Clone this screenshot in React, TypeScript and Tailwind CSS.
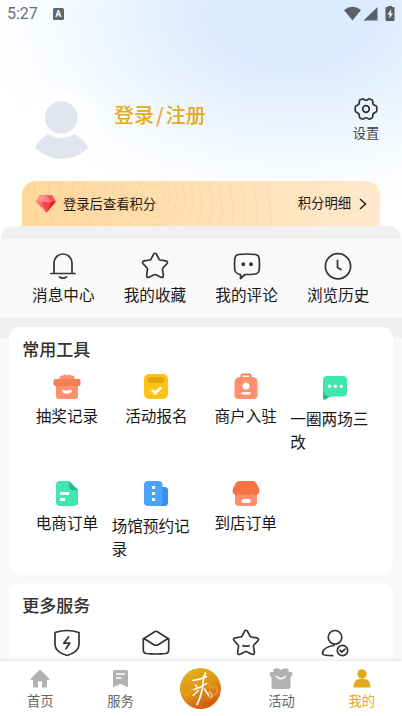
import React from "react";

const FONT = "font-['Noto_Sans_CJK_SC','Noto_Sans',sans-serif]";

function Line({ children }: { children: React.ReactNode }) {
  return (
    <svg width="28" height="28" viewBox="0 0 28 28" fill="none" stroke="#333" strokeWidth="1.7" strokeLinecap="round" strokeLinejoin="round">
      {children}
    </svg>
  );
}

function Fill({ children }: { children: React.ReactNode }) {
  return <svg width="28" height="28" viewBox="0 0 28 28">{children}</svg>;
}

const STAR =
  "M12.5 2.3Q14 .2 15.5 2.3L18 7.2Q18.3 7.9 19.2 8L24.8 8.9Q27.6 9.6 25.8 11.8L21.9 16Q21.4 16.6 21.5 17.3L22.4 23.4Q22.4 26.2 19.9 25.2L14.9 22.7Q14 22.3 13.1 22.7L8.1 25.2Q5.6 26.2 5.6 23.4L6.5 17.3Q6.6 16.6 6.1 16L2.2 11.8Q.4 9.6 3.2 8.9L8.800 8Q9.700 7.900 10 7.200Z";

const quick = [
  { label: "消息中心", icon: <Line><path d="M5 21V11a9 9 0 0 1 18 0v10M2 21.5h24M10.5 25Q14 27.2 17.5 25" /></Line> },
  { label: "我的收藏", icon: <Line><path d={STAR} /></Line> },
  {
    label: "我的评论",
    icon: <Line><path d="M5.500 2.500Q14 1.500 22.500 2.500 25.800 3 26.200 6.500q.5 6 0 11.500-.5 3.500-4.200 4-5 .6-10 .5L7.500 26.500v-4Q2.300 21.500 1.800 18q-.5-6 0-11.500Q2.200 3 5.500 2.500Z" /><circle cx="10.300" cy="12.300" r="1.100" fill="#333" /><circle cx="18" cy="12.300" r="1.100" fill="#333" /></Line>,
  },
  { label: "浏览历史", icon: <Line><circle cx="14" cy="14.300" r="12.600" /><path d="M13.500 8.300v7.200l3.500 2" /></Line> },
];

const tools = [
  {
    label: "抽奖记录",
    icon: <Fill><path d="M6.500 7Q5.500 2 10 2.500Q12 .5 14 2.800Q16 .5 18 2.500Q22.500 2 21.500 7Z" fill="#ff906b" /><path d="M3 11h22v12q0 3-3 3H6q-3 0-3-3Z" fill="#ff906b" /><rect x=".5" y="6" width="27" height="7" rx="2" fill="#f37f55" /><path d="M10.500 18q3.500 2.500 7 0" fill="none" stroke="#fff" strokeWidth="2.800" strokeLinecap="round" /></Fill>,
  },
  {
    label: "活动报名",
    icon: <Fill><rect x="2" y="1" width="24" height="25" rx="5" fill="#ffc315" /><rect x="5.500" y="4" width="17" height="6" rx="3" fill="#dfa90e" /><path d="m10 17 3.300 3 5.700-5.500" fill="none" stroke="#fff" strokeWidth="2.800" /></Fill>,
  },
  {
    label: "商户入驻",
    icon: <Fill><path d="M9.500 5V2.500q0-1 1-1h7q1 0 1 1V5" fill="none" stroke="#f37f55" strokeWidth="2" /><path d="M7 4h14q4.500 1 4.500 5v13q0 4-4 4h-15q-4 0-4-4V9Q2.500 5 7 4Z" fill="#ff906b" /><circle cx="14" cy="13" r="3.500" fill="#fff" /><rect x="9.500" y="19" width="9" height="2.500" fill="#fff" /></Fill>,
  },
  {
    label: "一圈两场三改",
    icon: <Fill><path d="M2 14v12.500h3q2-3 7-3.500Z" fill="#24bd88" /><path d="M6 3h16q4 0 4 4v12.500q0 4-4 4H10q-8 0-8-8V7q0-4 4-4Z" fill="#40e6b0" /><g fill="#fff"><circle cx="8.500" cy="13.300" r="1.700" /><circle cx="14.300" cy="13.300" r="1.700" /><circle cx="20.200" cy="13.300" r="1.700" /></g></Fill>,
  },
  {
    label: "电商订单",
    icon: <Fill><path d="M7 1h9l9 9v12q0 4-4 4H7q-4 0-4-4V5q0-4 4-4Z" fill="#40e6b0" /><path d="M16 1v5q0 4 4 4h5Z" fill="#24bd88" /><path d="M7 13.500h9M7 19.500h5" stroke="#fff" strokeWidth="2.800" /></Fill>,
  },
  {
    label: "场馆预约记录",
    icon: <Fill><rect x="13" y="7" width="13" height="19" rx="3.500" fill="#388fe9" /><rect x="2" y="1" width="18.500" height="25" rx="4" fill="#4ca2ff" /><g fill="#fff"><rect x="10" y="6" width="3" height="3" /><rect x="10" y="12" width="3" height="3" /><rect x="10" y="18" width="3" height="3" /></g></Fill>,
  },
  {
    label: "到店订单",
    icon: <Fill><path d="M3 12h22v10q0 4-4 4H7q-4 0-4-4Z" fill="#ff906b" /><path d="M7.500 1h13q3 0 4.500 3.500l2 4q1.500 5-2.500 6.500-3 .6-4.500-1-3 2.500-6 .5-3 2-6-.5-1.500 1.600-4.500 1Q-.5 13.500 1 8.500l2-4Q4.500 1 7.500 1Z" fill="#f27344" /><rect x="9.500" y="19" width="9" height="4" rx="1.500" fill="#fff" /></Fill>,
  },
];

const more = [
  <Line key="s"><path d="M14 1.500Q20 1.500 26 3.500v12.500Q25.500 23 14 26.500 2.500 23 2 16V3.500Q8 1.500 14 1.500Z" /><path d="m15.500 8-4.700 6.300 6-.3-3.800 5.700" /></Line>,
  <Line key="m"><path d="m2 9.500 11-7Q14 2 15 2.500l11 7-9.500 6Q14 17 11.500 15.500ZM1.300 9.700v11.500Q1.300 24 4.300 24.500q9.700 1 19.400 0 3-.5 3-3.300V9.700" /></Line>,
  <Line key="f"><path d={STAR} /><path d="M11 16.600q3 1.200 6 0" /></Line>,
  <Line key="u"><circle cx="14" cy="8.300" r="6.800" /><path d="M13 16.500Q1.500 18 1.500 25q0 1.600 10 1.700" /><circle cx="21.500" cy="21.500" r="5.200" /><path d="m19 21.500 1.800 1.500 3.200-2.800" /></Line>,
];

const rings = [11, 17, 24, 32, 40, 49, 59, 69, 80, 92, 104, 118];

function Banner() {
  return (
    <div className="relative mx-[22px] mt-[21px] flex h-[45px] w-[358px] items-center overflow-hidden rounded-t-[14px] bg-linear-to-r from-[#ffd89b] to-[#ffe8cb] px-[14px] text-[13.3px] text-[#1d1a16]">
      <svg className="absolute inset-0" width="358" height="45" fill="none" stroke="#b98735" strokeOpacity=".09">
        {rings.map((r) => (
          <path key={r} d={`M${131 - r * 0.6} ${12 - r * 0.7}Q131 ${12 - r * 0.9} ${131 + r * 0.6} ${12 - r * 0.7}Q${131 + r} ${12 - r * 0.4} ${131 + r} ${12 + r * 0.3}Q${131 + r * 0.9} ${12 + r} 131 ${12 + r}Q${131 - r * 1.1} ${12 + r * 0.7} ${131 - r} ${12 - r * 0.1}Z`} />
        ))}
      </svg>
      <svg width="20" height="18" viewBox="0 0 20 18" className="relative">
        <path d="M4 0h12l4 6.500L10.500 17.500 0 6.500Z" fill="#fb5357" />
        <path d="M4 0h6.500L6 7H0Z" fill="#ff9090" />
        <path d="M10.500 0 6 7h9Z" fill="#ff8080" />
        <path d="M0 6.500 6 7l4.500 10.500Z" fill="#ff6b6d" />
        <path d="m15 7-4.500 10.500L20 6.500Z" fill="#e91c1c" />
        <path d="m6 7 4.500 10.500L15 7Z" fill="#f4474b" />
      </svg>
      <span className="relative ml-[7px] pt-px">登录后查看积分</span>
      <span className="relative ml-auto pb-[2px]">积分明细</span>
      <svg className="relative ml-[8px] mr-[-1px]" width="8" height="12" viewBox="0 0 8 12" fill="none" stroke="#28231d" strokeWidth="1.500"><path d="m1 1 5.500 5L1 11" /></svg>
    </div>
  );
}

function Header() {
  return (
    <header className="h-[226px] bg-white bg-[radial-gradient(ellipse_290px_185px_at_292px_15px,#d9ebfd_0%,#dcecfe_30%,#ebf4fe_58%,#f8fbff_83%,#ffffff_108%)]">
      <div className="flex h-[28px] items-center pl-[7px] pr-[7px] font-[Roboto,sans-serif] text-[16px] text-[#6a6e73]">
        <span>5:27</span>
        <span className="ml-[15px] flex h-[12px] w-[11px] items-center justify-center rounded-[1.500px] bg-[#62676c] text-[9px] font-bold leading-none text-white">A</span>
        <svg className="ml-auto" width="51" height="16" viewBox="0 0 51 16" fill="#596067">
          <path d="M0 4Q8.500-2.500 17 4L8.500 14.500Z" />
          <path d="M33.500 1v13.500H19.500Z" />
          <path d="M44 1V0h4v1h1.500q1 0 1 1v12q0 1-1 1h-7q-1 0-1-1V2q0-1 1-1Z" />
          <path d="m47.300 3-3.800 5.500h2v4l3.500-5.200h-2.200Z" fill="#eaf3fc" />
        </svg>
      </div>
      <div className="flex h-[132px] pt-[56px]">
        <div className="ml-[22px] mt-[6px] size-[80px] rounded-full">
          <svg width="80" height="80" viewBox="0 0 80 80">
            <circle cx="39.500" cy="39.500" r="39" fill="#fff" fillOpacity=".6" />
            <circle cx="39.300" cy="27.500" r="16.300" fill="#e2e5ed" />
            <path d="M26.500 44Q39.500 52 52.500 44 62 49 66.300 58 54 68.900 39.500 68.900T13 58Q17 49 26.500 44Z" fill="#e2e5ed" />
          </svg>
        </div>
        <div className="ml-[12px] mt-[14px] text-[20px] font-medium leading-[34px] text-[#e3ab19]">登录<span className="px-[2px]">/</span>注册</div>
        <div className="ml-auto mr-[22px] mt-[13px] flex w-[28px] flex-col items-center text-[13.3px] leading-[18px] text-[#444]">
          <svg width="24" height="24" viewBox="0 0 24 24" fill="none" stroke="#333" strokeWidth="1.700" strokeLinejoin="round">
            <path d="M8 2Q9 1.500 10 2.500 12 4 14 2.500 15 1.500 16 2L18 3Q19 3.800 18.700 5.200 18.700 7.800 21.300 8.600 22.700 9 22.800 10.200v3.600Q22.700 15 21.300 15.400 18.700 16.200 18.700 18.800 19 20.200 18 21l-2 1q-1 .5-2-.5-2-1.500-4 0-1 1-2 .5l-2-1Q5 20.200 5.300 18.800 5.300 16.200 2.700 15.400 1.300 15 1.200 13.800v-3.600Q1.300 9 2.700 8.600 5.300 7.800 5.300 5.200 5 3.800 6 3Z" />
            <circle cx="12" cy="12" r="3.300" />
          </svg>
          <span className="mt-[3px] whitespace-nowrap">设置</span>
        </div>
      </div>
      <Banner />
    </header>
  );
}

function Tab({ label, active, children }: { label: string; active?: boolean; children: React.ReactNode }) {
  return (
    <div className={`flex flex-1 flex-col items-center pt-[7px] text-[13.3px] leading-[18px] ${active ? "text-[#e3ab19]" : "text-[#666]"}`}>
      <svg width="24" height="22" viewBox="0 0 24 22" fill={active ? "#e3ab19" : "#b1b1b1"}>{children}</svg>
      <span className="mt-[2px]">{label}</span>
    </div>
  );
}

function TabBar() {
  return (
    <nav className="relative flex h-[55px] shrink-0 bg-white shadow-[0_-1px_4px_rgba(0,0,0,0.12)]">
      <Tab label="首页"><path d="M12 1.500 21.500 11q.5 1-1 1H19v6q0 1.500-1.500 1.500H14v-6h-4v6H6.500Q5 19.500 5 18v-6H3.500Q2 12 2.500 11Z" /></Tab>
      <Tab label="服务"><path d="M5.500 2h12q1.500 0 1.500 1.500v15.700L11.500 16 4 19.200V3.500Q4 2 5.500 2Z" /><path d="M7 6h9M7 10h5.500" stroke="#fff" strokeWidth="1.500" /></Tab>
      <div className="flex flex-1 justify-center pt-[7px]">
        <svg className="-ml-px" width="41" height="41" viewBox="0 0 41 41">
          <defs><linearGradient id="brand" x1=".2" y1="0" x2=".7" y2="1"><stop stopColor="#dfb51b" /><stop offset=".5" stopColor="#df9518" /><stop offset="1" stopColor="#d2540f" /></linearGradient></defs>
          <circle cx="20.500" cy="20.500" r="20.500" fill="url(#brand)" />
          <path d="M5 28q5-1 7-7 4 2 5-2M28 15q1 6 5 4t4 3-4 5q-3 5-6 2" fill="none" stroke="#edbd58" strokeWidth="2" opacity=".35" />
          <g fill="none" stroke="#fff" strokeLinecap="round" strokeLinejoin="round">
            <path d="M12.500 12.500q7-.5 14-4" strokeWidth="1.500" />
            <path d="M25.500 5q-2 4-2.500 9-.5 12-6 22.500" strokeWidth="1.700" />
            <path d="m15.500 17 2 2.500" strokeWidth="1.500" />
            <path d="M14 21.500q7-2 12.500-6" strokeWidth="1.500" />
            <path d="m18.500 22.500-5.500 5" strokeWidth="1.500" />
          </g>
          <path d="m24.500 21 4.500 7" fill="none" stroke="#fff" strokeWidth="1.500" strokeLinecap="round" />
          <path d="M29 24q4 2 2.500 5.500" fill="none" stroke="#ffe0a0" strokeWidth="1.100" strokeLinecap="round" />
        </svg>
      </div>
      <Tab label="活动"><path d="M5 1q3-2 7 1 4-3 7-1 1 1 .5 3H22q1.500 0 1.500 2t-2 3v10q0 2-2 2h-15q-2 0-2-2V9Q.5 8 .5 6T2 4h2.500Q4 2 5 1Z" /><path d="M7.500 8.500q4.500 4.500 9 0" fill="none" stroke="#fff" strokeWidth="1.700" strokeLinecap="round" /></Tab>
      <Tab label="我的" active><circle cx="12" cy="6" r="4.700" /><path d="M3.500 18.500Q4 11.500 9 11h6q5 .5 5.500 7.500 0 1-1 1h-15q-1 0-1-1Z" /></Tab>
    </nav>
  );
}

export default function App() {
  return (
    <div className={`flex h-[716px] w-[402px] flex-col overflow-hidden bg-[#f9f9f9] text-[#171717] ${FONT}`}>
      <main className="min-h-0 flex-1 overflow-hidden">
        <Header />
        <div className="bg-white">
          <div className="mx-px h-[13px] rounded-t-[16px] bg-[#f0f0f0]" />
        </div>
        <section className="grid h-[79px] grid-cols-4 bg-[#f9f9f9] pl-[17.500px] pr-[18px] pt-[13px]">
          {quick.map((q) => (
            <div key={q.label} className="flex flex-col items-center text-[15.600px] leading-[22px]">
              {q.icon}
              <span className="mt-[3px]">{q.label}</span>
            </div>
          ))}
        </section>
        <div className="bg-[linear-gradient(#f0f0f0_20px,#f9f9f9_20px)] px-[9px] pt-[9px]">
          <section className="h-[246px] rounded-[11px] bg-white px-[13.300px] pt-[9px]">
            <h2 className="text-[17px] font-medium leading-[25px] text-[#333]">常用工具</h2>
            <div className="mt-[12px] grid grid-cols-4 grid-rows-[107px_107px]">
              {tools.map((t) => (
                <div key={t.label} className="flex flex-col items-center text-[15.600px] leading-[23px]">
                  {t.icon}
                  <span className={t.label.length > 5 ? "mt-[6px]" : "mt-[3px]"}>{t.label}</span>
                </div>
              ))}
            </div>
          </section>
          <section className="mt-[10px] h-[100px] rounded-[11px] bg-white px-[13.300px] pt-[9px]">
            <h2 className="text-[17px] font-medium leading-[25px] text-[#333]">更多服务</h2>
            <div className="mt-[12px] grid grid-cols-4 justify-items-center">{more}</div>
          </section>
        </div>
      </main>
      <TabBar />
    </div>
  );
}
